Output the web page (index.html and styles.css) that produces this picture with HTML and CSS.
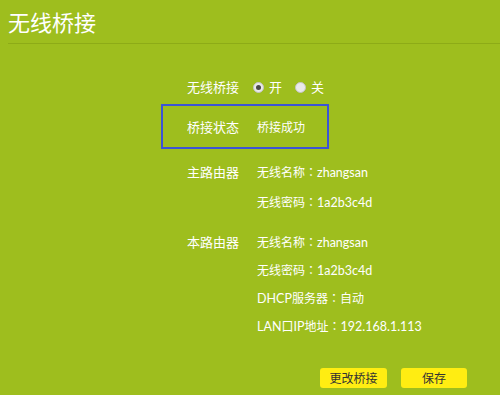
FILE: index.html
```html
<!DOCTYPE html>
<html lang="zh-CN">
<head>
<meta charset="utf-8">
<title>无线桥接</title>
<link rel="stylesheet" href="styles.css">
</head>
<body>
<div class="page">
  <div class="header"><h1 class="title">无线桥接</h1></div>
  <div class="form">
    <div class="row r1">
      <div class="label">无线桥接</div>
      <div class="value radios">
        <span class="radio checked"></span><span class="opt">开</span>
        <span class="radio"></span><span class="opt">关</span>
      </div>
    </div>
    <div class="row status">
      <div class="label">桥接状态</div>
      <div class="value">桥接成功</div>
    </div>
    <div class="row group">
      <div class="label">主路由器</div>
      <div class="value">无线名称<span class="colon" lang="ja">：</span><span class="en">zhangsan</span></div>
    </div>
    <div class="row tall">
      <div class="label"></div>
      <div class="value">无线密码<span class="colon" lang="ja">：</span><span class="en">1a2b3c4d</span></div>
    </div>
    <div class="row group2">
      <div class="label">本路由器</div>
      <div class="value">无线名称<span class="colon" lang="ja">：</span><span class="en">zhangsan</span></div>
    </div>
    <div class="row">
      <div class="label"></div>
      <div class="value">无线密码<span class="colon" lang="ja">：</span><span class="en">1a2b3c4d</span></div>
    </div>
    <div class="row">
      <div class="label"></div>
      <div class="value"><span class="en">DHCP</span>服务器<span class="colon" lang="ja">：</span>自动</div>
    </div>
    <div class="row">
      <div class="label"></div>
      <div class="value"><span class="en">LAN</span>口<span class="en">IP</span>地址<span class="colon" lang="ja">：</span><span class="en">192.168.1.113</span></div>
    </div>
  </div>
  <div class="buttons">
    <button class="btn b1">更改桥接</button>
    <button class="btn b2">保存</button>
  </div>
</div>
</body>
</html>
```
FILE: styles.css
```css
html, body {
  margin: 0;
  padding: 0;
  background: #9ebe1e;
}
body {
  width: 500px;
  height: 395px;
  overflow: hidden;
  font-family: "Noto Sans CJK SC", "Noto Sans", sans-serif;
  color: #ffffff;
}
.page {
  width: 500px;
  height: 395px;
}
.header {
  margin-left: 8px;
  height: 43px;
  border-bottom: 1px solid #8dab17;
  display: flex;
  align-items: center;
}
.title {
  margin: -2px 0 0 0;
  font-size: 22px;
  font-weight: 400;
  line-height: 30px;
  color: #ffffff;
}
.form {
  margin-left: 161px;
  padding-top: 29px;
}
.row {
  display: flex;
  align-items: center;
  height: 28px;
  font-size: 13px;
  line-height: 18px;
}
.label {
  width: 78px;
  text-align: right;
  flex: none;
}
.value {
  margin-left: 18px;
  font-size: 12px;
}
.en {
  font-family: Lato, "Liberation Sans", sans-serif;
  font-size: 12.5px;
}
.colon {
  font-family: "Noto Sans CJK JP", "Noto Sans CJK TC", sans-serif;
}
.radios {
  display: flex;
  align-items: center;
  margin-left: 14px;
  font-size: 13px;
}
.radio {
  box-sizing: border-box;
  width: 11px;
  height: 11px;
  border-radius: 50%;
  background: #e9e9e9;
  border: 1px solid #c4c4c4;
  display: flex;
  align-items: center;
  justify-content: center;
}
.radio.checked::after {
  content: "";
  width: 5px;
  height: 5px;
  border-radius: 50%;
  background: #4a4a4a;
}
.opt {
  margin-left: 5px;
  margin-right: 13px;
}
.row.status {
  box-sizing: border-box;
  width: 168px;
  height: 45px;
  margin-top: 3px;
  border: 2px solid #3b54d6;
}
.row.status .label {
  width: 76px;
}
.row.group {
  margin-top: 9px;
}
.row.tall {
  margin-top: 2px;
}
.row.group2 {
  margin-top: 12px;
}
.buttons {
  display: flex;
  justify-content: flex-end;
  gap: 14px;
  padding-right: 33px;
  margin-top: 28px;
}
.btn {
  box-sizing: border-box;
  height: 20px;
  border: none;
  border-radius: 3px;
  background: #ffed12;
  color: #333333;
  font-family: "Noto Sans CJK SC", "Noto Sans", sans-serif;
  font-size: 12px;
  line-height: 20px;
  padding: 0;
}
.b1 { width: 67px; }
.b2 { width: 66px; }
```
